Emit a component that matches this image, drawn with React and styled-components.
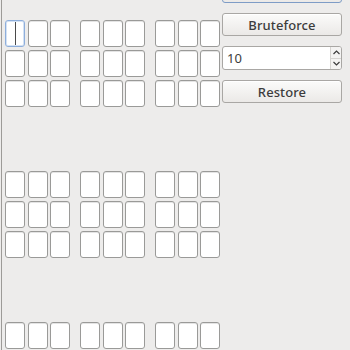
import React from "react"
import styled, {createGlobalStyle} from 'styled-components';

const GlobalStyle = createGlobalStyle`
  html, body {
    margin: 0;
    padding: 0;
    background: #edeceb;
    overflow: hidden;
  }
  body {
    font-family: "Noto Sans", "DejaVu Sans", sans-serif;
  }
`

const blocks = [0, 1, 2]
const rows = [0, 1, 2]
const groups = [0, 1, 2]

const App = () => {
    return (
        <Window>
            <GlobalStyle/>
            <Board>
                {blocks.map(b =>
                    <Block key={b}>
                        {rows.map(r =>
                            <Row key={r}>
                                {groups.map(g =>
                                    <Group key={g}>
                                        {[0, 1, 2].map(c => {
                                            const first = b === 0 && r === 0 && g === 0 && c === 0
                                            return <Cell key={c} focused={first}>{first && <Caret/>}</Cell>
                                        })}
                                    </Group>
                                )}
                            </Row>
                        )}
                    </Block>
                )}
            </Board>
            <Side>
                {/* the label of this button is scrolled out of view */}
                <Button focused/>
                <Button>Bruteforce</Button>
                <Spin>
                    <SpinValue>10</SpinValue>
                    <Arrows>
                        <Arrow>
                            <svg width="7" height="5" viewBox="0 0 7 5">
                                <path d="M0.5 4 L3.5 1 L6.5 4" fill="none" stroke="#3c3c3c" strokeWidth="1.2"/>
                            </svg>
                        </Arrow>
                        <Arrow>
                            <svg width="7" height="5" viewBox="0 0 7 5">
                                <path d="M0.5 1 L3.5 4 L6.5 1" fill="none" stroke="#3c3c3c" strokeWidth="1.2"/>
                            </svg>
                        </Arrow>
                    </Arrows>
                </Spin>
                <Button>Restore</Button>
            </Side>
        </Window>
    )
}

const Window = styled.div`
  display: flex;
  align-items: flex-start;
  width: 350px;
  height: 350px;
  overflow: hidden;
`
const Board = styled.div`
  display: flex;
  flex-direction: column;
  gap: 64px;
  margin-left: 1px;
  border-left: 1px solid #9d9b98;
  padding: 20px 0 0 3px;
  height: 350px;
  box-sizing: border-box;
`
const Block = styled.div`
  display: flex;
  flex-direction: column;
  gap: 3px;
`
const Row = styled.div`
  display: flex;
  gap: 10px;
`
const Group = styled.div`
  display: flex;
  gap: 2.5px;
`
const Cell = styled.div`
  position: relative;
  width: 20px;
  height: 27px;
  box-sizing: border-box;
  background: #ffffff;
  border: 1px solid ${p => p.focused ? '#8eaedb' : '#9a9a98'};
  border-radius: 3px;
  box-shadow: ${p => p.focused ? 'inset 0 0 0 1px #d4e2f4' : 'inset 0 1px 0 #e4e4e4'};
`
const Caret = styled.span`
  position: absolute;
  left: 9px;
  top: 1px;
  bottom: 1px;
  width: 1px;
  background: #4a4a4a;
`
const Side = styled.div`
  display: flex;
  flex-direction: column;
  gap: 10px;
  width: 120px;
  margin-left: 2px;
  margin-top: -20px;
`
const Button = styled.div`
  height: 23px;
  box-sizing: border-box;
  display: flex;
  align-items: center;
  justify-content: center;
  border: 1px solid ${p => p.focused ? '#7e9cc6' : '#a9a7a4'};
  border-radius: 3px;
  background: linear-gradient(#fbfbfa, #ebe9e7);
  box-shadow: inset 0 1px 0 #ffffff;
  font-size: 13px;
  font-weight: 500;
  color: #3c3c3c;
  letter-spacing: 0.1px;
`
const Spin = styled.div`
  height: 24px;
  box-sizing: border-box;
  display: flex;
  border: 1px solid #a9a7a4;
  border-radius: 3px;
  background: #ffffff;
  overflow: hidden;
`
const SpinValue = styled.div`
  flex: 1;
  display: flex;
  align-items: center;
  padding-left: 4px;
  font-size: 13px;
  color: #3c3c3c;
`
const Arrows = styled.div`
  display: flex;
  flex-direction: column;
  width: 10px;
  border-left: 1px solid #d6d4d1;
  background: #f4f3f2;
`
const Arrow = styled.div`
  flex: 1;
  display: flex;
  align-items: center;
  justify-content: center;
  & + & {
    border-top: 1px solid #d6d4d1;
  }
`
export default App;
